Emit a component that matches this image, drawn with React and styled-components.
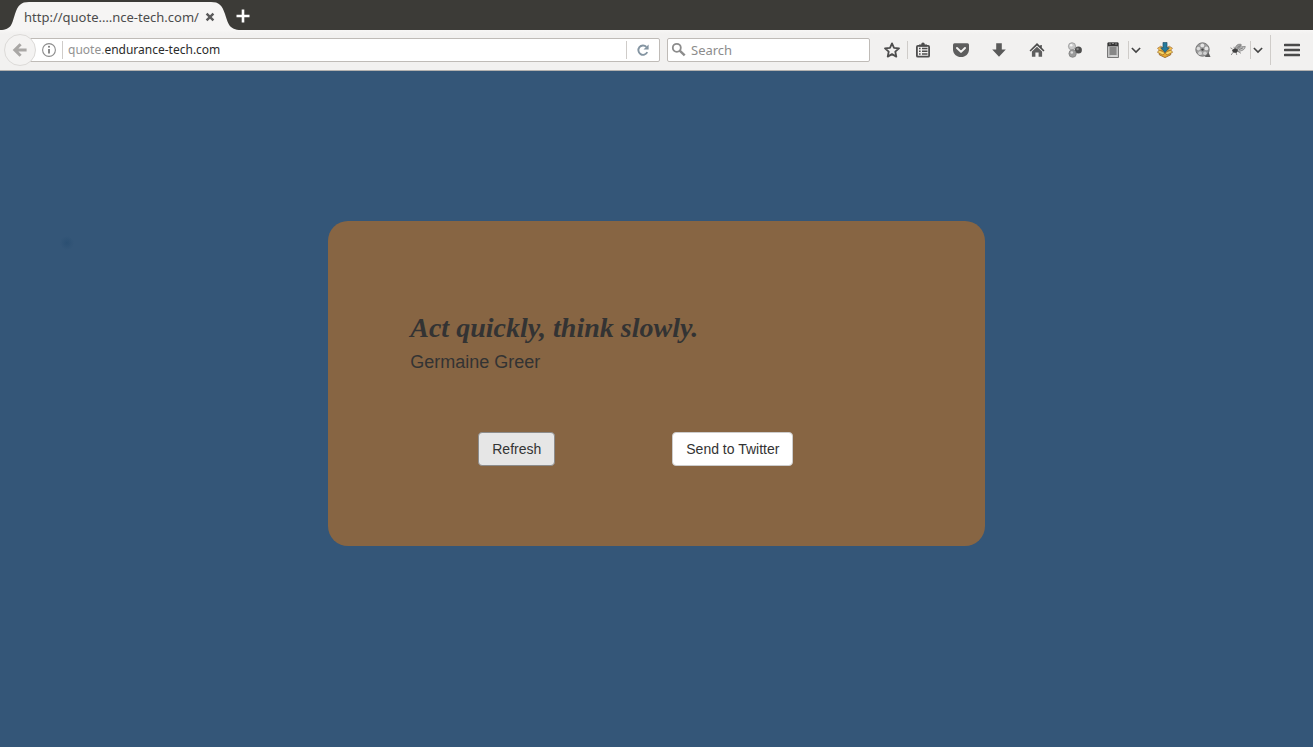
import React from "react";
import styled, { createGlobalStyle } from "styled-components";

const uiFont = '"Noto Sans", "Open Sans", sans-serif';
const pageFont = '"Liberation Sans", Arial, sans-serif';

const GlobalStyle = createGlobalStyle`
  *, *::before, *::after { box-sizing: border-box; }
  body { margin: 0; }
  button, input { font: inherit; color: inherit; }
`;

const Browser = styled.div`
  display: flex;
  flex-direction: column;
  min-height: 100vh;
  font-family: ${uiFont};
`;

const TabStrip = styled.header`
  display: flex;
  height: 30px;
  background: #3c3b37;
`;

const Tab = styled.div`
  position: relative;
  display: flex;
  align-items: center;
  width: 226px;
  padding: 3px 8px 0 24px;
  color: #4c4c4c;
  font-size: 13px;
  line-height: 16px;
`;

const TabShape = styled.svg`
  position: absolute;
  left: 0;
  bottom: 0;
`;

const TabTitle = styled.span`
  position: relative;
  flex: 1;
  white-space: nowrap;
`;

const BareButton = styled.button`
  position: relative;
  display: flex;
  flex: none;
  align-items: center;
  justify-content: center;
  width: ${(p) => p.$width || 38}px;
  height: ${(p) => p.$height || 24}px;
  padding: 0;
  border: 0;
  background: none;
`;

const NewTabButton = styled(BareButton)`
  align-self: center;
  margin: 2px 0 0 2px;
`;

const Toolbar = styled.nav`
  display: flex;
  align-items: center;
  height: 41px;
  padding-left: 4px;
  background: linear-gradient(#f7f6f5, #f2f1f0 4px);
  border-bottom: 1px solid #b3b1af;
`;

const BackButton = styled(BareButton)`
  z-index: 1;
  border: 1px solid #dcdad8;
  border-radius: 50%;
  background: #f4f3f2;
`;

const Field = styled.div`
  display: flex;
  align-items: center;
  height: 24px;
  border: 1px solid #bfbbb7;
  border-radius: 2px;
  background: #fff;
  line-height: 16px;
`;

const AddressField = styled(Field)`
  flex: 1;
  min-width: 0;
  margin-left: -8px;
  padding-left: 12px;
  font-size: 12px;
`;

const SearchField = styled(Field)`
  flex: none;
  width: 203px;
  margin: 0 7px;
  padding-left: 3px;
  gap: 4px;
  font-size: 13px;
`;

const Address = styled.div`
  flex: 1;
  padding-left: 5px;
  color: #2b2b2b;
  white-space: nowrap;
`;

const Subdomain = styled.span`
  color: #929292;
`;

const SearchInput = styled.input`
  flex: 1;
  min-width: 0;
  padding: 0;
  border: 0;
  outline: 0;
  background: none;
  &::placeholder { color: #8c8c8c; opacity: 1; }
`;

const Divider = styled.span`
  flex: none;
  width: 1px;
  height: ${(p) => p.$height || 18}px;
  margin-left: ${(p) => p.$before || 0}px;
  background: #cfccc9;
`;

const ToolGroup = styled.div`
  display: flex;
  align-items: center;
  margin: 0 4px;
`;

const BookmarkGroup = styled(ToolGroup)`
  margin-left: 0;
`;

const Page = styled.main`
  flex: 1;
  padding: 150px 0;
  background: radial-gradient(circle 7px at 67px 172px, #2b4f72, #34567800) #345678;
  font-family: ${pageFont};
  color: #333;
`;

const QuoteCard = styled.section`
  width: 50%;
  margin: 0 auto;
  padding: 91px 82px 80px;
  border-radius: 20px;
  background: #876543;
`;

const Quote = styled.h1`
  margin: 0 0 8px;
  font: italic bold 28px/32px "Liberation Serif", "Times New Roman", serif;
`;

const Author = styled.p`
  margin: 0;
  font-size: 18px;
  line-height: 20px;
`;

const Actions = styled.div`
  display: flex;
  gap: 117px;
  margin-top: 60px;
  padding-left: 68px;
`;

const ActionButton = styled.button`
  height: 34px;
  padding: 0 12px;
  border: 1px solid ${(p) => (p.$pressed ? "#8c8c8c" : "#ccc")};
  border-radius: 4px;
  background: ${(p) => (p.$pressed ? "#e6e6e6" : "#fff")};
  color: #333;
  font-size: 14px;
  line-height: 20px;
  padding: 0 13px;
  white-space: nowrap;
`;

const Icon = ({ size = 16, children }) => (
  <svg width={size} height={size} viewBox="0 0 16 16" fill="none" aria-hidden="true">
    {children}
  </svg>
);

const ink = "#4d4d4d";

const CloseIcon = () => (
  <Icon>
    <path d="M4.6 4.6l6.8 6.8M11.4 4.6l-6.8 6.8" stroke="#5a5a5a" strokeWidth="2.4" />
  </Icon>
);
const PlusIcon = () => (
  <Icon>
    <path d="M8 1.5v13M1.5 8h13" stroke="#fff" strokeWidth="2.6" />
  </Icon>
);
const BackIcon = () => (
  <Icon>
    <path d="M8.6 2.2L2.8 8l5.8 5.8M3.5 8H14.6" stroke="#a9a7a5" strokeWidth="3" />
  </Icon>
);
const InfoIcon = () => (
  <Icon>
    <circle cx="8" cy="8" r="6.4" stroke="#8c8c8c" strokeWidth="1.1" />
    <path d="M8 7v4.6" stroke="#777" strokeWidth="1.7" />
    <circle cx="8" cy="4.7" r="1" fill="#777" />
  </Icon>
);
const ReloadIcon = () => (
  <Icon>
    <path d="M12.3 10.2A4.7 4.7 0 1 1 11.4 4.8" stroke="#8495a2" strokeWidth="1.9" />
    <path d="M13.6 2.4v5H8.5z" fill="#8495a2" />
  </Icon>
);
const SearchIcon = () => (
  <Icon>
    <circle cx="5.8" cy="5.8" r="4" stroke="#8c8c8c" strokeWidth="1.8" />
    <path d="M8.7 8.7l5 4.6" stroke="#8c8c8c" strokeWidth="2.5" />
  </Icon>
);
const StarIcon = () => (
  <Icon>
    <path
      d="M8 1.4l2 4.4 5 .5-3.7 3.4 1 4.9L8 12.1l-4.3 2.5 1-4.9L1 6.3l5-.5z"
      stroke={ink}
      strokeWidth="1.8"
      strokeLinejoin="round"
    />
  </Icon>
);
const ClipboardIcon = () => (
  <Icon>
    <rect x="1.9" y="3.9" width="12.2" height="10.8" rx="1" stroke={ink} strokeWidth="1.8" />
    <path d="M4 4.5V2.4h2.2a1.8 1.8 0 0 1 3.6 0H12v2.1z" fill={ink} />
    <path d="M4 6.6h1.6M7 6.6h5.5M4 9.3h1.6M7 9.3h5.5M4 12h1.6M7 12h5.5" stroke={ink} strokeWidth="1.5" />
  </Icon>
);
const PocketIcon = () => (
  <Icon>
    <path d="M1.5 1.3h13Q16 1.3 16 2.8v4.4C16 12 12.5 15 8 15S0 12 0 7.2V2.8q0-1.5 1.5-1.5z" fill="#5e5e5e" />
    <path d="M4 6l4 3.9L12 6" stroke="#f5f4f3" strokeWidth="2" strokeLinecap="round" strokeLinejoin="round" />
  </Icon>
);
const DownloadIcon = () => (
  <Icon>
    <path d="M5.2 1.2h5.6v6.3h4L8 14.8 1.2 7.5h4z" fill="#5a5a5a" />
  </Icon>
);
const HomeIcon = () => (
  <Icon>
    <path d="M8 .9L.5 8.4l1.1 1.1L8 3.4l6.4 6.1 1.1-1.1-2.7-2.7V3h-1.5v1.2z" fill="#4b4b4b" />
    <path d="M2.9 9.6L8 4.8l5.1 4.8v5.2H9.6v-4.2H6.4v4.2H2.9z" fill="#5e5e5e" />
  </Icon>
);
const SpheresIcon = () => (
  <Icon>
    <circle cx="5" cy="4.3" r="3.6" fill="#c9c9c9" stroke="#8d8d8d" strokeWidth=".7" />
    <circle cx="11.4" cy="8" r="3.5" fill="#4e4e4e" />
    <circle cx="10.6" cy="7" r="1.2" fill="#898989" />
    <circle cx="5.6" cy="11.6" r="3.7" fill="#9b9b9b" stroke="#777" strokeWidth=".7" />
    <circle cx="4.2" cy="3.3" r="1.3" fill="#f4f4f4" />
    <circle cx="4.8" cy="10.5" r="1.3" fill="#dedede" />
  </Icon>
);
const NotepadIcon = () => (
  <Icon>
    <path d="M2.5 1h11v14.5h-11z" fill="#c4c4c4" stroke="#777" />
    <path d="M3 .5h10v3.8H3z" fill="#363636" />
    <path d="M4.5 2h1M7.5 1.5h1M10.5 2h1" stroke="#ddd" />
    <path d="M4.5 6h7M4.5 8h7M4.5 10h7M4.5 12h7" stroke="#4b4b4b" strokeWidth="1.1" />
    <path d="M5.5 14h7" stroke="#e1e1e1" />
  </Icon>
);
const ChevronIcon = () => (
  <Icon size={10}>
    <path d="M1.4 4.8L8 11.2l6.6-6.4" stroke="#444" strokeWidth="2.6" />
  </Icon>
);
const BoxDownloadIcon = () => (
  <Icon>
    <path d="M2.3 8L8 6l5.7 2v4.8L8 15.6l-5.7-2.8z" fill="#e7a92e" stroke="#8e5c20" strokeWidth=".8" />
    <path d="M2.3 8L8 10.8 13.7 8l2 2.3L10 13l-2-2.2L6 13 .4 10.3z" fill="#f7d563" stroke="#9d6827" strokeWidth=".7" />
    <path d="M.5 6.2l3.2-2L8 6.6 3 8.8zM15.5 6.2l-3.2-2L8 6.6l5 2.2z" fill="#f3bd4e" stroke="#996328" strokeWidth=".6" />
    <path d="M6 .4h4v5.4h2.4L8 10.4 3.6 5.8H6z" fill="#247b9e" stroke="#234e67" strokeWidth=".7" />
  </Icon>
);
const FilmIcon = () => (
  <Icon>
    <path d="M13.4 6.5q-.2 5 2.1 8.5h-5.5" fill="#5e5e5e" />
    <circle cx="7.5" cy="7.5" r="6.7" fill="#9b9b9b" stroke="#7a7a7a" />
    <circle cx="7.3" cy="3.4" r="1.9" fill="#e4e4e4" />
    <circle cx="3.4" cy="6.6" r="1.8" fill="#dcdcdc" />
    <circle cx="11.4" cy="6.4" r="1.9" fill="#e4e4e4" />
    <circle cx="5.1" cy="11.2" r="1.9" fill="#d2d2d2" />
    <circle cx="10" cy="11.2" r="1.8" fill="#d2d2d2" />
    <circle cx="7.5" cy="7.6" r="1.2" fill="#444" />
  </Icon>
);
const FlyIcon = () => (
  <Icon>
    <path d="M5 7Q6 1.5 11 2.2q2 1-5 6z" fill="#a5a5a5" stroke="#777" strokeWidth=".6" />
    <path d="M6 8q5-4.5 9.3-3.5Q15 9 7 9.6z" fill="#c4c4c4" stroke="#777" strokeWidth=".7" />
    <path d="M9 7.5l4-1.6M7.5 5.5l3-2" stroke="#666" strokeWidth=".7" />
    <path d="M2 8l3-1.7 3.2 1.5L6.5 11 3 10.5z" fill="#3f3f3f" />
    <path d="M2.5 7L.5 5.8M3 10.3L1.2 13M6 10.5l.8 2.5M8 9.5l3 1.8M4.5 7L4 4.8" stroke="#777" strokeWidth=".8" />
  </Icon>
);
const MenuIcon = () => (
  <Icon>
    <path d="M1 3h14M1 8h14M1 13h14" stroke="#4a4a4a" strokeWidth="2.6" strokeLinecap="round" />
  </Icon>
);

const ToolButton = ({ label, width, children }) => (
  <BareButton type="button" aria-label={label} $width={width}>
    {children}
  </BareButton>
);

export default function App() {
  return (
    <Browser>
      <GlobalStyle />
      <TabStrip>
        <Tab>
          <TabShape width="242" height="30" viewBox="0 0 242 30" aria-hidden="true">
            <path
              d="M0 30C12 30 12 23 15 14C18 5 21 2 29 2H211C219 2 222 5 225 14C228 23 229 30 241 30Z"
              fill="#f6f5f4"
            />
          </TabShape>
          <TabTitle>http://quote.…nce-tech.com/</TabTitle>
          <BareButton type="button" aria-label="Close tab" $width={16} $height={16}>
            <CloseIcon />
          </BareButton>
        </Tab>
        <NewTabButton type="button" aria-label="New tab" $width={30}>
          <PlusIcon />
        </NewTabButton>
      </TabStrip>

      <Toolbar>
        <BackButton type="button" aria-label="Back" $width={32} $height={32}>
          <BackIcon />
        </BackButton>
        <AddressField>
          <BareButton type="button" aria-label="Site information" $width={16} $height={16}>
            <InfoIcon />
          </BareButton>
          <Divider $before={5} />
          <Address>
            <Subdomain>quote.</Subdomain>endurance-tech.com
          </Address>
          <Divider />
          <ToolButton label="Reload" width={32}>
            <ReloadIcon />
          </ToolButton>
        </AddressField>
        <SearchField as="label">
          <SearchIcon />
          <SearchInput type="text" placeholder="Search" aria-label="Search" />
        </SearchField>

        <BookmarkGroup>
          <ToolButton label="Bookmark this page" width={30}><StarIcon /></ToolButton>
          <Divider />
          <ToolButton label="Bookmarks" width={30}><ClipboardIcon /></ToolButton>
        </BookmarkGroup>
        <ToolButton label="Pocket"><PocketIcon /></ToolButton>
        <ToolButton label="Downloads"><DownloadIcon /></ToolButton>
        <ToolButton label="Home"><HomeIcon /></ToolButton>
        <ToolButton label="Proxy"><SpheresIcon /></ToolButton>
        <ToolGroup>
          <ToolButton label="Notes" width={30}><NotepadIcon /></ToolButton>
          <Divider />
          <ToolButton label="Notes options" width={13}><ChevronIcon /></ToolButton>
        </ToolGroup>
        <ToolButton label="Download helper"><BoxDownloadIcon /></ToolButton>
        <ToolButton label="Video"><FilmIcon /></ToolButton>
        <ToolGroup>
          <ToolButton label="Inspector" width={24}><FlyIcon /></ToolButton>
          <Divider />
          <ToolButton label="Inspector options" width={13}><ChevronIcon /></ToolButton>
        </ToolGroup>
        <Divider $height={30} $before={2} />
        <ToolButton label="Menu" width={42}><MenuIcon /></ToolButton>
      </Toolbar>

      <Page>
        <QuoteCard>
          <Quote>Act quickly, think slowly.</Quote>
          <Author>Germaine Greer</Author>
          <Actions>
            <ActionButton type="button" $pressed>Refresh</ActionButton>
            <ActionButton type="button">Send to Twitter</ActionButton>
          </Actions>
        </QuoteCard>
      </Page>
    </Browser>
  );
}
